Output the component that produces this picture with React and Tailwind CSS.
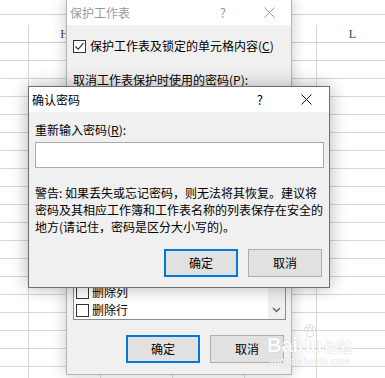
import React from 'react';

const COLS = 6;
const ROWS = 19;

function Grid() {
  return (
    <div className="flex flex-col">
      <div className="h-[15px] border-b border-[#d2d2d2]" />
      <div className="h-[10px]" />
      <div className="flex h-[18px] border-b border-[#cfcfcf]">
        <div className="w-[29px] shrink-0 border-r border-[#d6d6d6]" />
        {['H', 'I', 'J', 'K', 'L', ''].map((c, i) => (
          <div
            key={i}
            className="flex w-[72px] shrink-0 items-center justify-center border-r border-[#d6d6d6] font-['Liberation_Serif',serif] text-[12px] text-[#444]"
          >
            {c}
          </div>
        ))}
      </div>
      {Array.from({ length: ROWS }).map((_, r) => (
        <div key={r} className="flex h-[18px] border-b border-[#d6d6d6]">
          <div className="w-[29px] shrink-0 border-r border-[#d6d6d6]" />
          {Array.from({ length: COLS }).map((__, c) => (
            <div key={c} className="w-[72px] shrink-0 border-r border-[#d6d6d6]" />
          ))}
        </div>
      ))}
    </div>
  );
}

function CloseX({ color }) {
  return (
    <svg width="11" height="11" viewBox="0 0 11 11">
      <path d="M0.5 0.5 L10.5 10.5 M10.5 0.5 L0.5 10.5" stroke={color} strokeWidth="1" />
    </svg>
  );
}

function Check({ checked }) {
  return (
    <div className="flex h-[13px] w-[13px] shrink-0 items-center justify-center border border-[#333] bg-white">
      {checked && (
        <svg width="11" height="11" viewBox="0 0 11 11">
          <path d="M1.5 5.5 L4.2 8.3 L9.5 2.2" fill="none" stroke="#222" strokeWidth="1.1" />
        </svg>
      )}
    </div>
  );
}

function Btn({ primary, children }) {
  return (
    <div
      className={`flex h-[28px] w-[74px] items-center justify-center bg-[#e1e1e1] text-[12px] text-black ${
        primary ? 'border-2 border-[#0078d7]' : 'border border-[#adadad]'
      }`}
    >
      {children}
    </div>
  );
}

function Paw() {
  return (
    <svg width="14" height="14" viewBox="0 0 14 14">
      <g fill="#fff" stroke="#d0d0d0" strokeWidth="0.8">
        <ellipse cx="3" cy="5" rx="1.6" ry="2" />
        <ellipse cx="5.6" cy="2.4" rx="1.6" ry="2" />
        <ellipse cx="8.6" cy="2.4" rx="1.6" ry="2" />
        <ellipse cx="11.2" cy="5" rx="1.6" ry="2" />
        <path d="M7 6.5 C4.5 6.5 3 9.5 3.6 11.5 C4.4 13.3 9.6 13.3 10.4 11.5 C11 9.5 9.5 6.5 7 6.5 Z" />
      </g>
    </svg>
  );
}

export default function App() {
  return (
    <div className="relative h-[378px] w-[385px] overflow-hidden bg-white font-['Noto_Sans_CJK_SC',sans-serif] text-[12px] leading-[16px] text-black">
      <Grid />

      {/* 保护工作表 (inactive, behind) */}
      <div className="absolute left-[66px] top-[-1px] flex h-[376px] w-[226px] flex-col border border-[#b4b4b4] bg-[#f0f0f0] shadow-[0_0_14px_rgba(0,0,0,0.22)]">
        <div className="flex h-[25px] shrink-0 items-center bg-white pl-[3px] text-[#9a9a9a]">
          <span className="flex-1">保护工作表</span>
          <span className="mr-[38px] text-[13px]">?</span>
          <span className="mr-[16px] flex">
            <CloseX color="#9a9a9a" />
          </span>
        </div>
        <div className="flex flex-1 flex-col pl-[6px] pr-[5px] pt-[13px]">
          <div className="flex h-[16px] items-center gap-[4px]">
            <Check checked />
            <span>
              保护工作表及锁定的单元格内容(<span className="underline">C</span>)
            </span>
          </div>
          <div className="mt-[18px] h-[16px]">
            取消工作表保护时使用的密码(<span className="underline">P</span>):
          </div>
          <div className="mt-[6px] h-[24px] border border-[#a9a9a9] bg-white" />
          <div className="mt-[10px] flex flex-1 border border-[#8c8c8c] bg-white">
            <div className="flex flex-1 flex-col justify-end pl-[2px]">
              {['删除列', '删除行'].map((t) => (
                <div key={t} className="flex h-[18px] items-center gap-[3px]">
                  <Check />
                  <span>{t}</span>
                </div>
              ))}
            </div>
            <div className="flex w-[17px] flex-col justify-end bg-[#f0f0f0] pb-[6px]">
              <svg width="17" height="6" viewBox="0 0 17 6">
                <path d="M5 1 L8.5 4.5 L12 1" fill="none" stroke="#606060" strokeWidth="1.4" />
              </svg>
            </div>
          </div>
          <div className="mb-[11px] mt-[15px] flex justify-end gap-[10px] pr-[2px]">
            <Btn primary>确定</Btn>
            <Btn>取消</Btn>
          </div>
        </div>
      </div>

      {/* 确认密码 (active) */}
      <div className="absolute left-[28px] top-[86px] flex h-[202px] w-[302px] flex-col border border-[#6e6e6e] bg-[#f0f0f0] shadow-[0_0_16px_rgba(0,0,0,0.3)]">
        <div className="flex h-[25px] shrink-0 items-center bg-white pl-[3px]">
          <span className="flex-1">确认密码</span>
          <span className="mr-[38px] text-[13px]">?</span>
          <span className="mr-[17px] flex">
            <CloseX color="#111" />
          </span>
        </div>
        <div className="flex flex-1 flex-col pl-[6px] pr-[5px] pt-[10px]">
          <div className="h-[16px]">
            重新输入密码(<span className="underline">R</span>):
          </div>
          <div className="mt-[4px] h-[26px] border border-[#a9a9a9] bg-white" />
          <div className="mt-[16px] whitespace-nowrap leading-[17px]">
            警告: 如果丢失或忘记密码，则无法将其恢复。建议将
            <br />
            密码及其相应工作簿和工作表名称的列表保存在安全的
            <br />
            地方(请记住，密码是区分大小写的)。
          </div>
          <div className="mt-[14px] flex justify-end gap-[10px] pr-[2px]">
            <Btn primary>确定</Btn>
            <Btn>取消</Btn>
          </div>
        </div>
      </div>

      {/* watermark */}
      <div className="absolute left-[267px] top-[324px] flex flex-col items-center opacity-90">
        <div className="flex items-end font-['Liberation_Sans',sans-serif] text-[20px] font-bold leading-[22px] text-white [text-shadow:0_0_1px_#b8b8b8]">
          <span>Bai</span>
          <span className="flex flex-col items-center">
            <Paw />
            <span className="-mt-[4px]">du</span>
          </span>
          <span className="ml-[2px] font-['Noto_Sans_CJK_SC',sans-serif] text-[14px] leading-[20px]">经验</span>
        </div>
        <div className="mt-[1px] font-['Liberation_Sans',sans-serif] text-[10px] leading-[10px] text-white [text-shadow:0_0_1px_#b8b8b8]">
          jingyan.baidu.com
        </div>
      </div>
    </div>
  );
}
